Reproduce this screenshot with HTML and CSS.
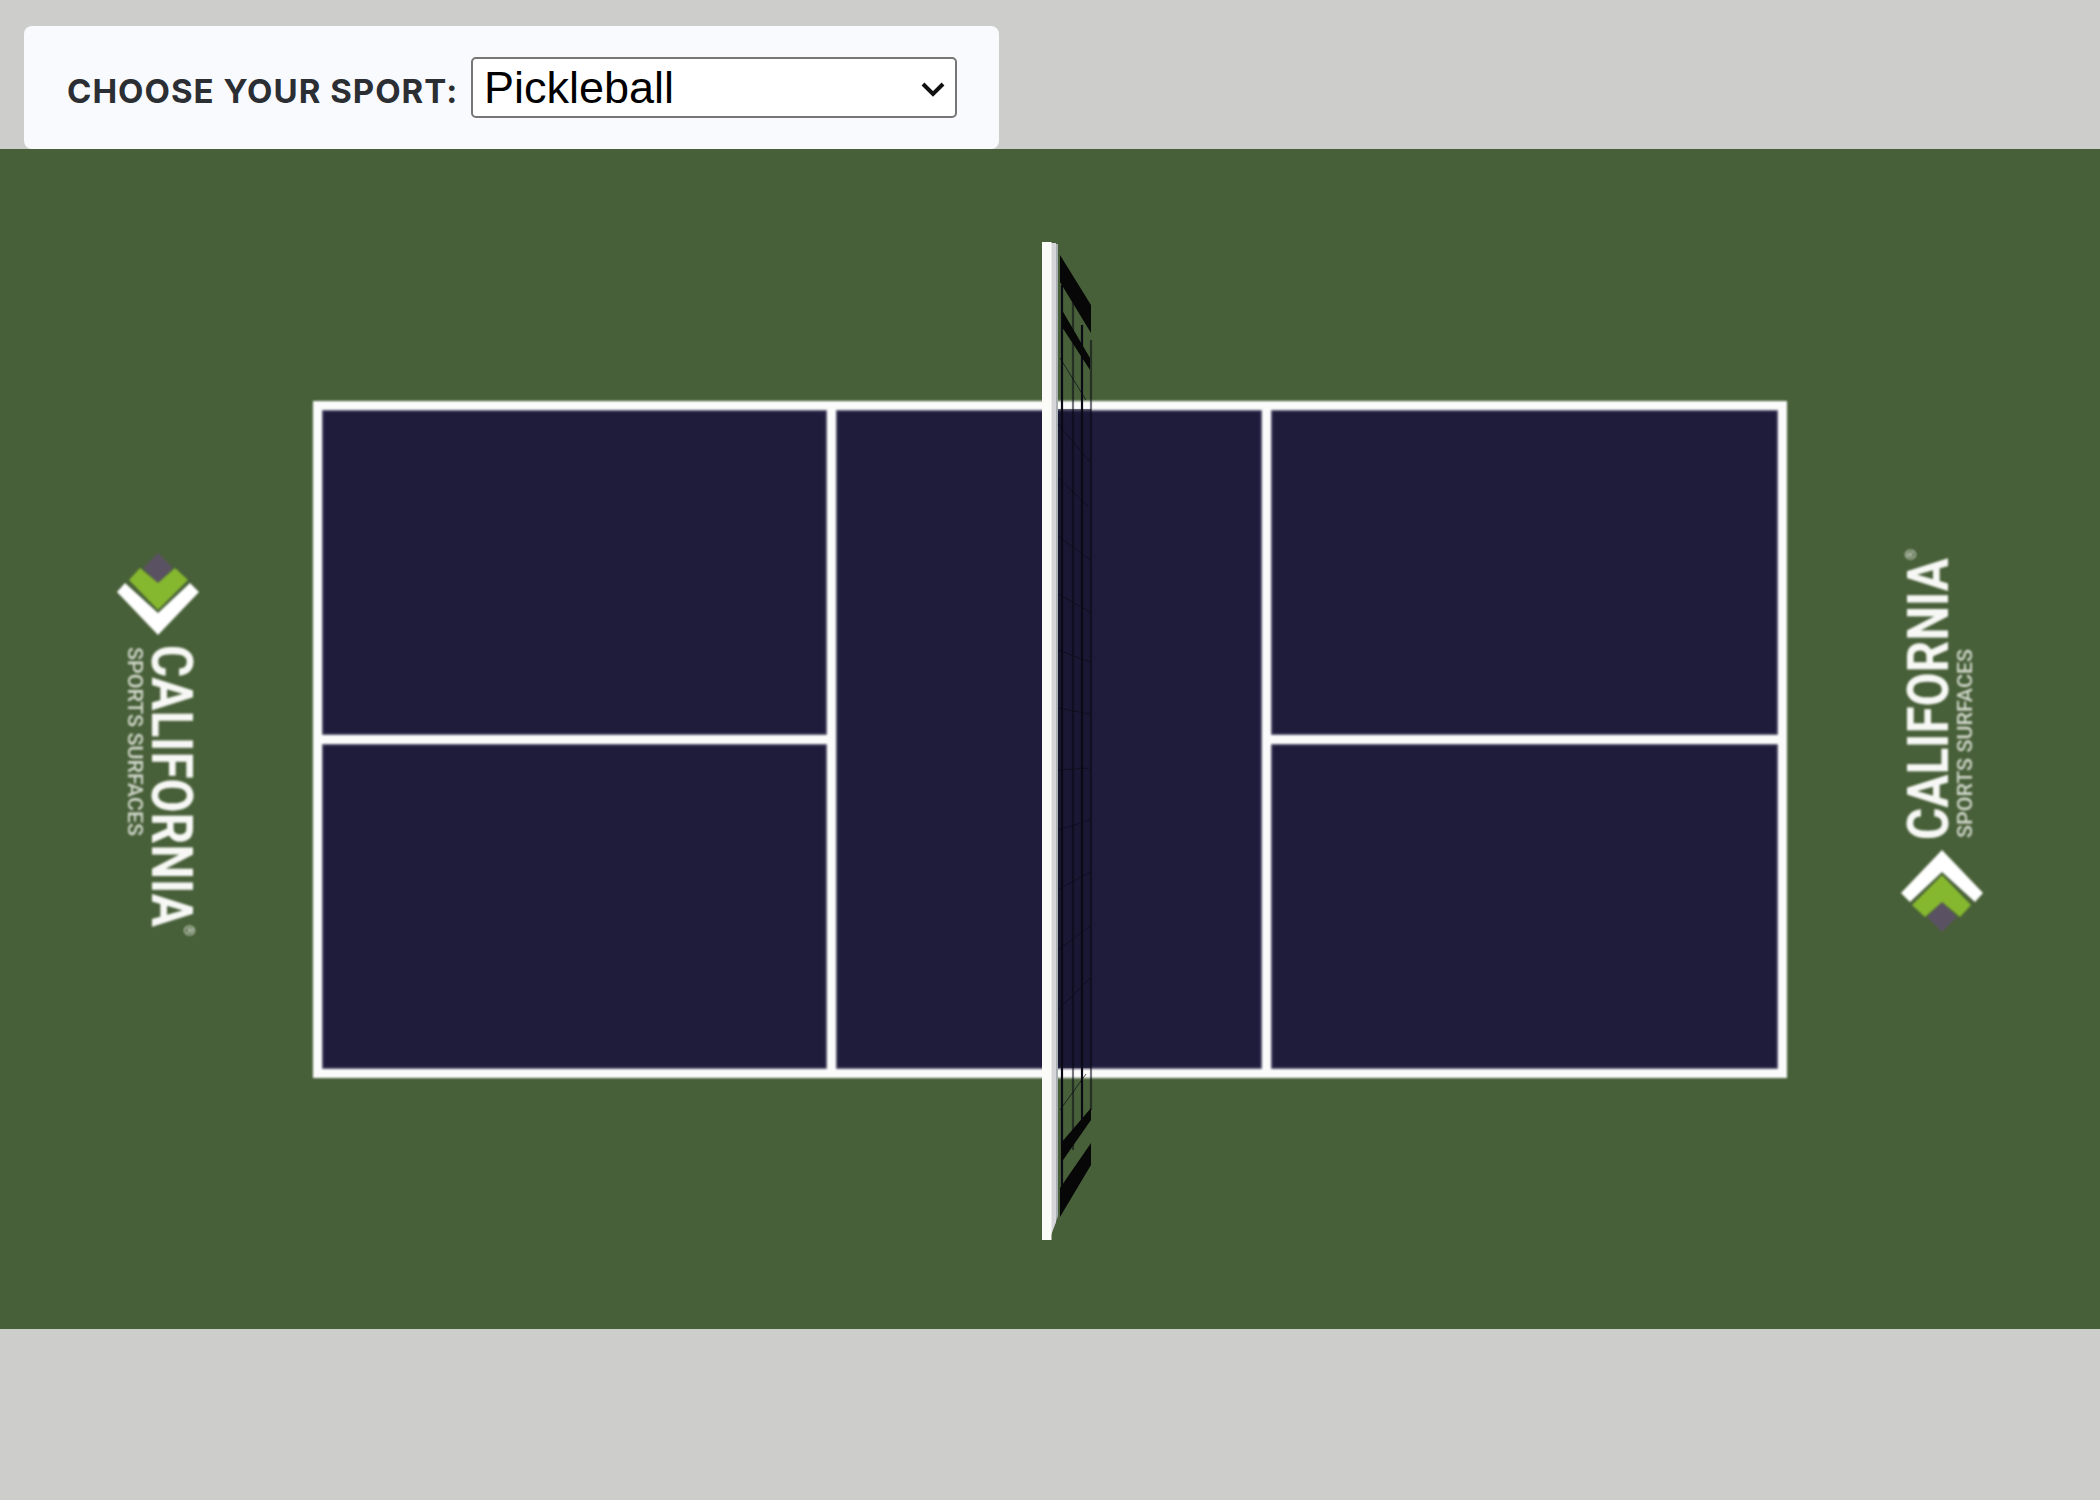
FILE: index.html
```html
<!DOCTYPE html>
<html lang="en">
<head>
  <meta charset="UTF-8" />
  <title>Court Builder</title>
  <link rel="stylesheet" href="styles.css">
</head>
<body>

  <!-- Sport picker -->
  <form class="picker">
    <label class="picker-label" for="sport">CHOOSE YOUR SPORT:</label>
    <div class="picker-field">
      <select class="picker-select" id="sport">
        <option>Pickleball</option>
        <option>Tennis</option>
        <option>Basketball</option>
      </select>
      <svg class="picker-arrow" viewBox="0 0 26 16" width="26" height="16">
        <path d="M3 3L13 13L23 3" />
      </svg>
    </div>
  </form>

  <main class="surround">
    <svg class="logo logo-left" viewBox="0 0 84 384" width="84" height="384">
      <polygon class="logo-diamond" points="42,1 57,16 42,31 27,16" />
      <polygon class="logo-green" points="13,28 24,16 42,31 59,16 72,28 42,58" />
      <polygon class="logo-white" points="1,40 9,31 42,61 74,31 83,40 42,83" />
      <text class="logo-name" transform="translate(36,93) rotate(90)" textLength="282" lengthAdjust="spacingAndGlyphs">CALIFORNIA</text>
      <text class="logo-sub" transform="translate(12,95) rotate(90)" textLength="189" lengthAdjust="spacingAndGlyphs">SPORTS SURFACES</text>
      <text class="logo-reg" transform="translate(68,373) rotate(90)">®</text>
    </svg>

    <div class="court">
      <div class="box box-a"></div>
      <div class="box box-b"></div>
      <div class="box kitchen"></div>
      <div class="box box-c"></div>
      <div class="box box-d"></div>
    </div>

    <svg class="logo logo-right" viewBox="0 0 84 384" width="84" height="384">
      <polygon class="logo-diamond" points="42,1 57,16 42,31 27,16" />
      <polygon class="logo-green" points="13,28 24,16 42,31 59,16 72,28 42,58" />
      <polygon class="logo-white" points="1,40 9,31 42,61 74,31 83,40 42,83" />
      <text class="logo-name" transform="translate(36,93) rotate(90)" textLength="282" lengthAdjust="spacingAndGlyphs">CALIFORNIA</text>
      <text class="logo-sub" transform="translate(12,95) rotate(90)" textLength="189" lengthAdjust="spacingAndGlyphs">SPORTS SURFACES</text>
      <text class="logo-reg" transform="translate(68,373) rotate(90)">®</text>
    </svg>

    <!-- Net and post, drawn over the court. Coordinates are page pixels -->
    <svg class="net" viewBox="1040 240 56 1002" width="56" height="1002">
      <rect class="net-tint" x="1058" y="409" width="33" height="659" />
      <path class="net-shade" d="M1055 244H1058V1216L1055 1224Z" />
      <path class="net-edge" d="M1050 243H1056V1222L1050 1238Z" />
      <rect class="net-post" x="1042" y="242" width="9.5" height="998" />

      <g class="net-diag">
        <path d="M1060 358L1086 400" />
        <path d="M1058 424L1090 462" />
        <path d="M1058 478L1088 506" />
        <path d="M1058 536L1090 560" />
        <path d="M1058 594L1090 612" />
        <path d="M1058 650L1090 662" />
        <path d="M1058 708L1090 714" />
        <path d="M1058 770L1090 768" />
        <path d="M1058 830L1090 820" />
        <path d="M1058 890L1090 872" />
        <path d="M1058 950L1090 926" />
        <path d="M1058 1010L1090 978" />
        <path d="M1060 1110L1086 1074" />
      </g>

      <path class="net-thin" d="M1062 285V1190" />
      <path class="net-thin net-thin-faint" d="M1073 300V1150" />
      <path class="net-thin" d="M1082 325V1125" />
      <path class="net-thin net-thin-faint" d="M1091 340V1110" />

      <path class="net-band" d="M1060 255L1091 305V333L1060 282Z" />
      <path class="net-band" d="M1062 310L1090 358V370L1062 327Z" />
      <path class="net-band" d="M1091 1108V1120L1061 1163V1143Z" />
      <path class="net-band" d="M1091 1143V1165L1060 1217V1188Z" />
    </svg>
  </main>

</body>
</html>
```

FILE: styles.css
```css
body {
  margin: 0;
  min-height: 1500px;
  background: #cdcdcb;
  font-family: 'Inter', 'Liberation Sans', sans-serif;
}

.picker {
  display: flex;
  align-items: center;
  justify-content: space-between;
  box-sizing: border-box;
  width: 975px;
  height: 123px;
  margin-left: 24px;
  padding: 31px 42px 31px 43px;
  position: relative;
  top: 26px;
  background: #f8fafd;
  border-radius: 8px;
  z-index: 2;
}

.picker-label {
  margin-top: 6px;
  font-size: 33px;
  font-weight: 700;
  letter-spacing: 1px;
  white-space: nowrap;
  color: #2b2e33;
}

.picker-field {
  position: relative;
  height: 61px;
}

.picker-select {
  appearance: none;
  display: block;
  width: 486px;
  height: 61px;
  padding: 0 11px;
  box-sizing: border-box;
  font-family: 'Liberation Sans', sans-serif;
  font-size: 45px;
  color: #000;
  background: #fff;
  border: 2px solid #767676;
  border-radius: 5px;
}

.picker-arrow {
  position: absolute;
  right: 11px;
  top: 24px;
  pointer-events: none;
}

.picker-arrow path {
  fill: none;
  stroke: #111;
  stroke-width: 4;
}

.surround {
  display: flex;
  justify-content: space-between;
  align-items: center;
  position: relative;
  height: 1180px;
  margin-top: 26px;
  padding: 0 116px;
  box-sizing: border-box;
  background: #486039;
}

.court {
  display: grid;
  grid-template-columns: 505px 1fr 507px;
  grid-template-rows: 1fr 1fr;
  gap: 9px;
  width: 1474px;
  height: 677px;
  padding: 9px;
  box-sizing: border-box;
  background: #fbfbfb;
  filter: blur(0.8px);
}

.box {
  background: #1e1b3b;
  box-shadow: inset 0 0 2px 1px #6f6d86;
}

.kitchen {
  grid-column: 2;
  grid-row: 1 / span 2;
}

.box-b { grid-column: 1; grid-row: 2; }
.box-c { grid-column: 3; grid-row: 1; }
.box-d { grid-column: 3; grid-row: 2; }

.logo {
  flex: none;
  overflow: visible;
  filter: blur(0.8px);
}

.logo-left { margin-top: 10px; }

.logo-right {
  margin-top: 3px;
  transform: rotate(180deg);
}

.logo-diamond { fill: #5a5263; }
.logo-green { fill: #86b82f; }
.logo-white { fill: #fff; }

.logo-name {
  font-family: 'Roboto', sans-serif;
  font-size: 58px;
  font-weight: 700;
  fill: #f7f8f5;
}

.logo-sub {
  font-family: 'Roboto', sans-serif;
  font-size: 21px;
  font-weight: 500;
  fill: #d3d9cd;
}

.logo-reg {
  font-family: 'Roboto', sans-serif;
  font-size: 14px;
  font-weight: 700;
  fill: #e4e8e0;
}

.net {
  position: absolute;
  left: 1040px;
  top: 91px;
  filter: blur(0.7px);
}

.net-tint { fill: #15152f; opacity: 0.6; }
.net-shade { fill: #a9aeb0; }
.net-edge { fill: #d6d6da; }
.net-post { fill: #fbfbf8; }
.net-band { fill: #070707; }

.net-thin {
  fill: none;
  stroke: #0a0a14;
  stroke-width: 2.2;
}

.net-thin-faint { opacity: 0.55; }

.net-diag path {
  fill: none;
  stroke: #0c0c18;
  stroke-width: 1;
  opacity: 0.7;
}
```
